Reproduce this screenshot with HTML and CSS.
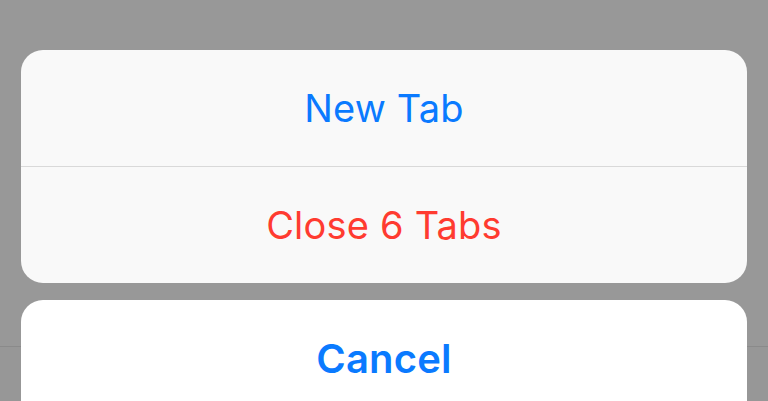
FILE: index.html
```html
<!DOCTYPE html>
<html>
<head>
<meta charset="utf-8">
<link rel="stylesheet" href="styles.css">
</head>
<body>
<div class="sheet">
  <div class="group">
    <div class="action blue">New Tab</div>
    <div class="action red">Close 6 Tabs</div>
  </div>
  <div class="group cancel">
    <div class="action blue bold">Cancel</div>
  </div>
</div>
</body>
</html>
```
FILE: styles.css
```css
html, body {
  margin: 0;
  padding: 0;
  height: 100%;
  overflow: hidden;
}
body {
  background: linear-gradient(to bottom, #989898 0, #989898 346px, #8a8a8a 346px, #8a8a8a 347px, #979797 347px);
  font-family: Inter, "Noto Sans", "Liberation Sans", sans-serif;
}
.sheet {
  padding: 50px 21px 0 21px;
  display: flex;
  flex-direction: column;
  gap: 17px;
}
.group {
  background: #f9f9f9;
  border-radius: 22px;
  overflow: hidden;
  display: flex;
  flex-direction: column;
}
.group.cancel {
  background: #ffffff;
  height: 101px;
  border-bottom-left-radius: 0;
  border-bottom-right-radius: 0;
}
.action {
  height: 116px;
  flex: none;
  display: flex;
  align-items: center;
  justify-content: center;
  font-size: 38px;
  letter-spacing: 0.2px;
}
.action + .action {
  border-top: 1px solid #d9d9d9;
}
.blue { color: #0a7aff; }
.red { color: #ff3b30; }
.bold {
  font-weight: 600;
  font-size: 40px;
}
```
